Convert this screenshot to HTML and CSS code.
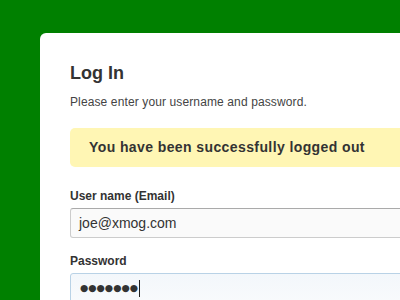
FILE: index.html
```html
<!DOCTYPE html>
<html>
<head>
<meta charset="utf-8">
<link rel="stylesheet" href="styles.css">
</head>
<body>
<div class="stage">
  <div class="card">
    <h1 class="title">Log In</h1>
    <p class="intro">Please enter your username and password.</p>
    <div class="notice">You have been successfully logged out</div>
    <label class="label">User name (Email)</label>
    <div class="field">joe@xmog.com</div>
    <label class="label label-pw">Password</label>
    <div class="field field-focus"><span class="dots">●●●●●●●</span><span class="caret"></span></div>
  </div>
</div>
</body>
</html>
```
FILE: styles.css
```css
html, body {
  margin: 0;
  padding: 0;
  width: 400px;
  height: 300px;
  overflow: hidden;
  background: #008000;
  font-family: "Liberation Sans", Arial, sans-serif;
  color: #333;
}
.stage {
  padding: 33px 0 0 40px;
}
.card {
  width: 420px;
  height: 320px;
  background: #fff;
  border-radius: 6px;
  padding: 29px 0 0 30px;
  box-sizing: border-box;
}
.title {
  margin: 0;
  font-size: 18px;
  line-height: 22px;
  font-weight: bold;
  color: #333;
}
.intro {
  margin: 10px 0 0;
  font-size: 12px;
  line-height: 16px;
  letter-spacing: 0.12px;
  color: #444;
}
.notice {
  margin-top: 18px;
  background: #fff6b4;
  border-radius: 5px;
  padding: 10px 0 10px 19px;
  font-size: 14px;
  line-height: 19px;
  letter-spacing: 0.4px;
  font-weight: bold;
  color: #333;
}
.label {
  display: block;
  margin-top: 21px;
  font-size: 12px;
  line-height: 16px;
  font-weight: bold;
  color: #333;
}
.label-pw {
  margin-top: 15px;
}
.field {
  margin-top: 4px;
  height: 30px;
  box-sizing: border-box;
  border: 1px solid #ccc;
  border-top-color: #aaa;
  border-radius: 3px 0 0 3px;
  background: #fafafa;
  padding: 0 8px;
  font-size: 14px;
  line-height: 28px;
  color: #333;
  display: flex;
  align-items: center;
}
.field-focus {
  margin-top: 4px;
  border-color: #b9d2e6;
  background: linear-gradient(#f3f7fb, #f8fafc);
}
.dots {
  font-family: "DejaVu Sans", sans-serif;
  font-size: 9.5px;
  color: #333;
  padding-left: 1px;
}
.caret {
  width: 1px;
  height: 17px;
  background: #222;
  margin-left: 1px;
}
```
